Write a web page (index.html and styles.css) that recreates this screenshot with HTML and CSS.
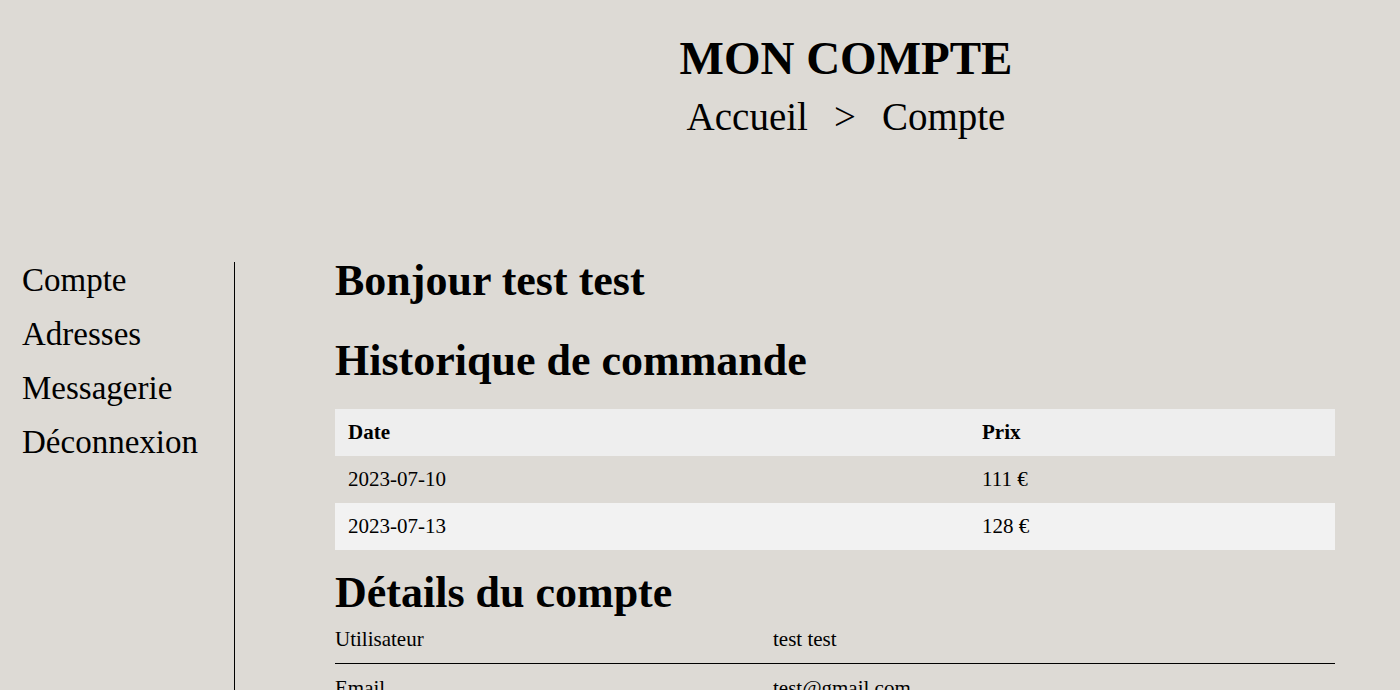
FILE: index.html
```html
<!DOCTYPE html>
<html lang="fr">
<head>
<meta charset="utf-8">
<title>Mon compte</title>
<link rel="stylesheet" href="styles.css">
</head>
<body>
<header class="page-header">
  <h1 class="page-title">MON COMPTE</h1>
  <nav class="breadcrumb">
    <a href="#">Accueil</a>
    <span class="sep">&gt;</span>
    <span>Compte</span>
  </nav>
</header>
<div class="layout">
  <aside class="sidebar">
    <ul class="side-nav">
      <li><a href="#">Compte</a></li>
      <li><a href="#">Adresses</a></li>
      <li><a href="#">Messagerie</a></li>
      <li><a href="#">Déconnexion</a></li>
    </ul>
  </aside>
  <main class="content">
    <h2 class="hello">Bonjour test test</h2>
    <h2 class="section-title">Historique de commande</h2>
    <table class="orders">
      <thead>
        <tr><th class="col-date">Date</th><th>Prix</th></tr>
      </thead>
      <tbody>
        <tr><td>2023-07-10</td><td>111 €</td></tr>
        <tr class="alt"><td>2023-07-13</td><td>128 €</td></tr>
      </tbody>
    </table>
    <h2 class="section-title details-title">Détails du compte</h2>
    <div class="details">
      <div class="detail-row"><span>Utilisateur</span><span>test test</span></div>
      <div class="detail-row"><span>Email</span><span>test@gmail.com</span></div>
    </div>
  </main>
</div>
</body>
</html>
```
FILE: styles.css
```css
html, body {
  margin: 0;
  padding: 0;
}
body {
  background: #dddad5;
  color: #000;
  font-family: "Liberation Serif", "Times New Roman", serif;
  height: 690px;
  overflow: hidden;
}
a {
  color: inherit;
  text-decoration: none;
}
.page-header {
  margin-left: 292px;
  text-align: center;
  padding-top: 35px;
  height: 262px;
  box-sizing: border-box;
}
.page-title {
  margin: 0;
  font-size: 47px;
  line-height: 47px;
  font-weight: bold;
}
.breadcrumb {
  margin-top: 15px;
  display: flex;
  justify-content: center;
  gap: 26px;
  font-size: 39px;
  line-height: 39px;
}
.layout {
  display: flex;
  align-items: stretch;
  min-height: 428px;
}
.sidebar {
  width: 212px;
  padding-left: 22px;
  border-right: 1px solid #000;
  flex: none;
}
.side-nav {
  list-style: none;
  margin: 0;
  padding: 0;
  display: flex;
  flex-direction: column;
  gap: 18px;
  font-size: 33px;
  line-height: 36px;
}
.content {
  padding-left: 100px;
  width: 1000px;
}
.hello,
.section-title {
  margin: 0;
  font-size: 44px;
  line-height: 38px;
  font-weight: bold;
}
.section-title {
  margin-top: 42px;
}
.orders {
  margin-top: 29px;
  width: 1000px;
  border-collapse: collapse;
  font-size: 21px;
  line-height: 24px;
}
.orders th,
.orders td {
  text-align: left;
  padding: 11px 13px 12px;
}
.orders th {
  font-weight: bold;
}
.orders thead tr {
  background: #eeeeee;
}
.orders tr.alt {
  background: #f2f2f2;
}
.col-date {
  width: 608px;
}
.details-title {
  margin-top: 24px;
}
.details {
  margin-top: 15px;
  font-size: 21px;
  line-height: 24px;
}
.detail-row {
  display: grid;
  grid-template-columns: 438px 1fr;
  padding-bottom: 12px;
  border-bottom: 1px solid #000;
  margin-bottom: 12px;
}
```
